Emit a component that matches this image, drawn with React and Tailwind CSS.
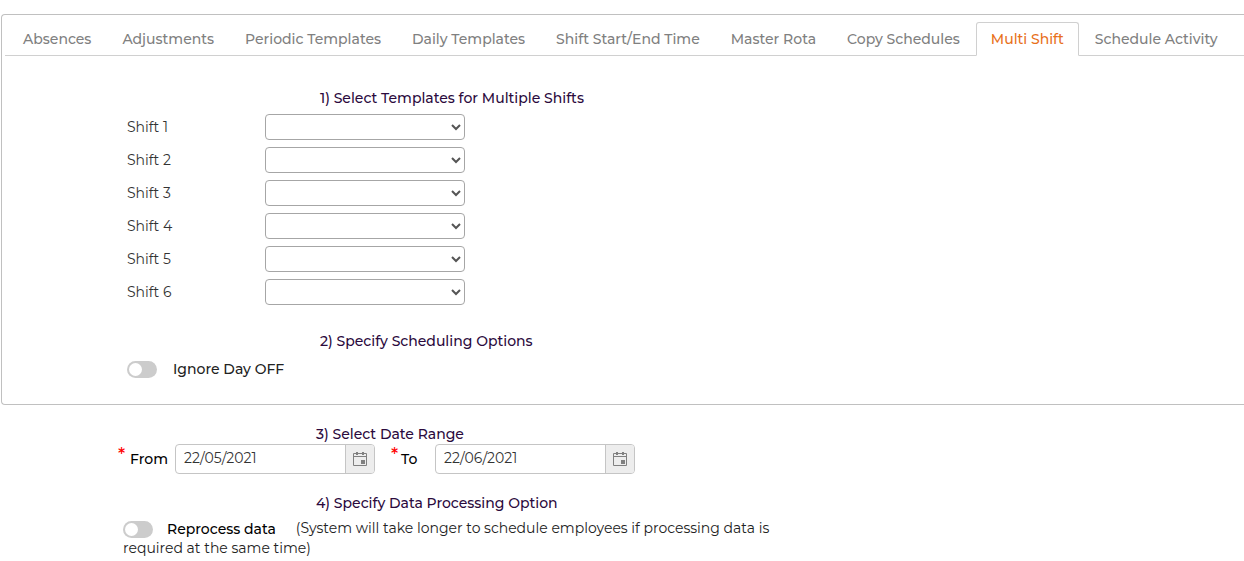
import { useState } from "react";

const tabs = [
  "Absences",
  "Adjustments",
  "Periodic Templates",
  "Daily Templates",
  "Shift Start/End Time",
  "Master Rota",
  "Copy Schedules",
  "Multi Shift",
  "Schedule Activity",
];

const shifts = [1, 2, 3, 4, 5, 6];

const CalendarIcon = () => (
  <svg width="16" height="16" viewBox="0 0 16 16" fill="none" stroke="#808080" aria-hidden="true">
    <path d="M1.5 2.5h13v12h-13zM1.5 5.5h13" />
    <path d="M5 1v3M11 1v3" strokeWidth="2" />
    <path d="M9 9h4v4H9z" fill="#808080" stroke="none" />
  </svg>
);

const Toggle = ({ id }) => (
  <input
    id={id}
    type="checkbox"
    role="switch"
    className="appearance-none shrink-0 w-[30px] h-[17px] rounded-full bg-[#cccccc] checked:bg-[#e8701a] before:block before:size-[13px] before:mt-[2px] before:ml-[2px] before:rounded-full before:bg-white checked:before:ml-[15px]"
  />
);

const StepTitle = ({ children }) => (
  <h2 className="text-[14px] leading-5 font-medium text-[#2b0a3d]">{children}</h2>
);

const DateField = ({ id, label, value }) => (
  <div className="flex w-[200px] h-[30px] rounded border border-[#c5c5c5] overflow-hidden">
    <input
      id={id}
      type="text"
      defaultValue={value}
      className="min-w-0 flex-1 px-2 pb-[2px] text-[14px] text-[#333]"
    />
    <button
      type="button"
      aria-label={`Pick ${label} date`}
      className="w-[29px] flex items-center justify-center border-l border-[#c5c5c5] bg-[#ededed]"
    >
      <CalendarIcon />
    </button>
  </div>
);

const App = () => {
  const [active, setActive] = useState("Multi Shift");

  return (
    <div className="bg-white pt-[14px] pl-px font-[Montserrat,Inter,sans-serif] text-[14px] text-black">
      {/* Tabbed panel */}
      <section className="rounded-l border border-r-0 border-[#c0c0c0] pl-[3px] pt-[7px] pb-[25px]">
        <div role="tablist" className="flex gap-px border-b border-[#d0d0d0] pl-[3px]">
          {tabs.map((tab) => (
            <button
              key={tab}
              type="button"
              role="tab"
              aria-selected={tab === active}
              onClick={() => setActive(tab)}
              className={`h-[34px] -mb-px px-[14px] rounded-t-[3px] border text-[14px] font-medium whitespace-nowrap ${
                tab === active
                  ? "border-[#d0d0d0] border-b-white bg-white text-[#e8701a]"
                  : "border-transparent text-[#808080]"
              }`}
            >
              {tab}
            </button>
          ))}
        </div>

        <div className="pl-[122px]">
          <div className="pt-8 pl-[193px]">
            <StepTitle>1) Select Templates for Multiple Shifts</StepTitle>
          </div>
          <div className="mt-[6px] flex flex-col gap-[7px]">
            {shifts.map((n) => (
              <div key={n} className="flex items-center">
                <label htmlFor={`shift-${n}`} className="w-[138px] leading-5 text-[#333]">
                  Shift {n}
                </label>
                <select
                  id={`shift-${n}`}
                  className="w-[200px] h-[26px] rounded border border-[#a6a6a6] bg-white text-[#555]"
                >
                  <option value=""></option>
                </select>
              </div>
            ))}
          </div>

          <div className="pt-[26px] pl-[193px]">
            <StepTitle>2) Specify Scheduling Options</StepTitle>
          </div>
          <div className="mt-2 flex items-center gap-4">
            <Toggle id="ignore-day-off" />
            <label htmlFor="ignore-day-off" className="leading-5 font-medium text-[#222]">
              Ignore Day OFF
            </label>
          </div>
        </div>
      </section>

      {/* Date range */}
      <section className="pl-[117px] pt-[19px]">
        <div className="pl-[198px]">
          <StepTitle>3) Select Date Range</StepTitle>
        </div>
        <div className="flex items-center">
          <label htmlFor="date-from" className="flex w-[57px] font-medium">
            <span className="w-3 -mt-1 text-[18px] leading-5 text-[#ff0000]">*</span>
            From
          </label>
          <DateField id="date-from" label="From" value="22/05/2021" />
          <label htmlFor="date-to" className="ml-4 flex w-11 font-medium">
            <span className="w-[10px] -mt-1 text-[18px] leading-5 text-[#ff0000]">*</span>
            To
          </label>
          <DateField id="date-to" label="To" value="22/06/2021" />
        </div>
      </section>

      {/* Data processing */}
      <section className="pl-[122px] pt-[19px]">
        <div className="pl-[193px]">
          <StepTitle>4) Specify Data Processing Option</StepTitle>
        </div>
        <div className="mt-[6px] max-w-[660px] leading-[19px] text-[#222]">
          <span className="mr-5 inline-flex items-center gap-[14px] align-middle text-black">
            <Toggle id="reprocess" />
            <label htmlFor="reprocess" className="font-medium">
              Reprocess data
            </label>
          </span>
          (System will take longer to schedule employees if processing data is required at the same time)
        </div>
      </section>
    </div>
  );
};

export default App;
